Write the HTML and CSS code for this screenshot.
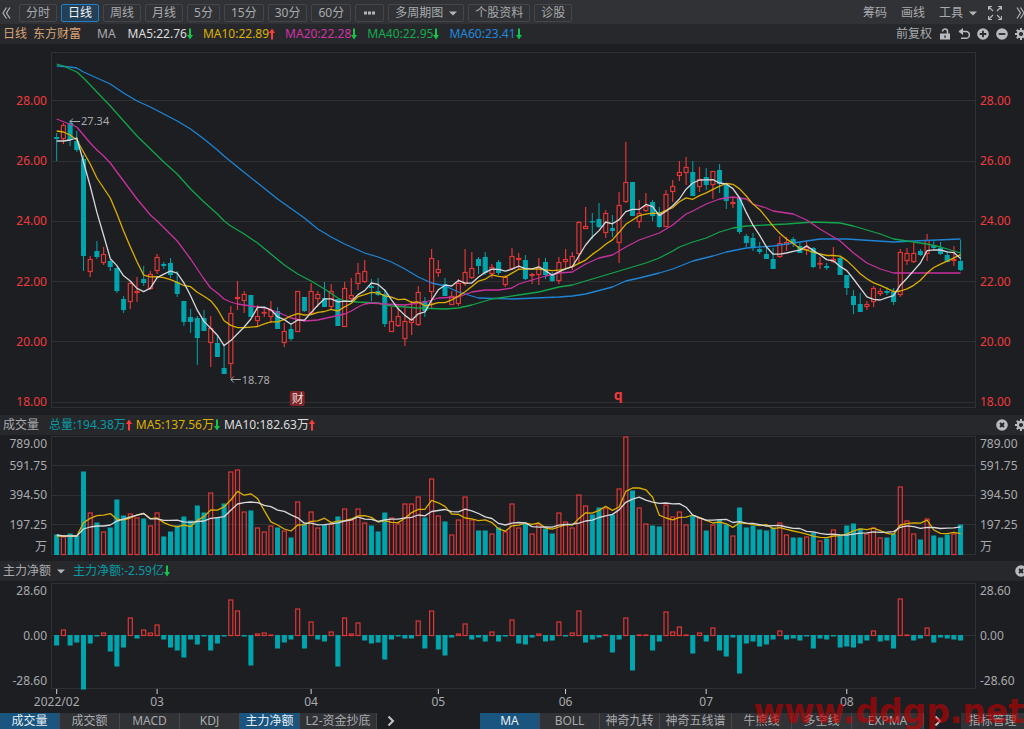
FILE: index.html
```html
<!DOCTYPE html>
<html lang="zh-CN">
<head>
  <meta charset="UTF-8">
  <meta name="viewport" content="width=device-width, initial-scale=1.0">
  <title>东方财富 日线</title>
  <link rel="stylesheet" href="styles.css">
</head>
<body>
  <!-- shared icons -->
  <svg class="sprite" aria-hidden="true">
    <symbol id="up" viewBox="0 0 6 12"><path d="M3 0.5L6 5H4V11.5H2V5H0Z" fill="#ff3b3b"/></symbol>
    <symbol id="down" viewBox="0 0 6 12"><path d="M3 11.5L6 7H4V0.5H2V7H0Z" fill="#12c64b"/></symbol>
    <symbol id="caret" viewBox="0 0 8 5"><path d="M0 0.5H8L4 4.5Z" fill="#b4b5b8"/></symbol>
    <symbol id="gear" viewBox="0 0 12 12">
      <path d="M6 0V12M0 6H12M1.8 1.8L10.2 10.2M10.2 1.8L1.8 10.2" stroke="#b9babd" stroke-width="2"/>
      <circle cx="6" cy="6" r="3.2" fill="#26282c" stroke="#b9babd" stroke-width="2.2"/>
    </symbol>
    <symbol id="close" viewBox="0 0 12 12">
      <circle cx="6" cy="6" r="5.8" fill="#b9babd"/>
      <path d="M4 4L8 8M8 4L4 8" stroke="#222327" stroke-width="1.8"/>
    </symbol>
  </svg>

  <header class="toolbar">
    <button class="icon-btn" aria-label="收起"><svg width="9" height="12" viewBox="0 0 9 12"><path d="M4.5 0.5L1 6L4.5 11.5M8 0.5L4.5 6L8 11.5" class="line"/></svg></button>
    <nav class="periods">
      <button class="btn">分时</button>
      <button class="btn active">日线</button>
      <button class="btn">周线</button>
      <button class="btn">月线</button>
      <button class="btn">5分</button>
      <button class="btn">15分</button>
      <button class="btn">30分</button>
      <button class="btn">60分</button>
      <button class="btn more" aria-label="更多"><svg width="13" height="4" viewBox="0 0 13 4"><path d="M1 .5h3v3h-3zM5 .5h3v3h-3zM9 .5h3v3h-3z" fill="#b4b5b8"/></svg></button>
      <span class="dropdown boxed">
        <select aria-label="多周期图"><option>多周期图</option></select>
        <svg class="caret"><use href="#caret"/></svg>
      </span>
      <button class="btn">个股资料</button>
      <button class="btn">诊股</button>
    </nav>
    <div class="tools">
      <button class="plain">筹码</button>
      <button class="plain">画线</button>
      <span class="dropdown">
        <select aria-label="工具"><option>工具</option></select>
        <svg class="caret"><use href="#caret"/></svg>
      </span>
      <button class="icon-btn" aria-label="全屏"><svg width="14" height="14" viewBox="0 0 14 14"><path d="M.5 4V.5H4M.5 .5L5 5M10 .5H13.5V4M13.5 .5L9 5M.5 10V13.5H4M.5 13.5L5 9M10 13.5H13.5V10M13.5 13.5L9 9" class="line"/></svg></button>
      <button class="icon-btn expand" aria-label="展开"><svg width="9" height="12" viewBox="0 0 9 12"><path d="M1 0.5L4.5 6L1 11.5M4.5 0.5L8 6L4.5 11.5" class="line"/></svg></button>
    </div>
  </header>

  <section class="info">
    <div class="legend">
      <span class="stock">日线</span>
      <span class="stock name">东方财富</span>
      <span class="label">MA</span>
      <span class="white">MA5:22.76<svg class="arrow"><use href="#down"/></svg></span>
      <span class="yellow">MA10:22.89<svg class="arrow"><use href="#up"/></svg></span>
      <span class="magenta">MA20:22.28<svg class="arrow"><use href="#down"/></svg></span>
      <span class="green">MA40:22.95<svg class="arrow"><use href="#down"/></svg></span>
      <span class="blue">MA60:23.41<svg class="arrow"><use href="#down"/></svg></span>
    </div>
    <div class="info-tools">
      <button class="plain">前复权</button>
      <button class="icon-btn" aria-label="锁定"><svg width="12" height="12" viewBox="0 0 12 12"><path d="M3.5 3.5a2.5 2.5 0 0 1 5 0V6" fill="none" stroke="#b9babd" stroke-width="1.5"/><path d="M1 5.5h10v6H1z" fill="#b9babd"/><path d="M5.3 7.5h1.4v2.2H5.3z" fill="#26282c"/></svg></button>
      <button class="icon-btn" aria-label="撤销"><svg width="12" height="12" viewBox="0 0 12 12"><path d="M1 3.5H8a3.4 3.4 0 0 1 0 6.8H3" fill="none" stroke="#b9babd" stroke-width="1.6"/><path d="M5 0V7L0.5 3.5Z" fill="#b9babd"/></svg></button>
      <button class="icon-btn" aria-label="放大"><svg width="12" height="12" viewBox="0 0 12 12"><circle cx="6" cy="6" r="5.8" fill="#b9babd"/><path d="M2.7 6H9.3M6 2.7V9.3" stroke="#26282c" stroke-width="1.8"/></svg></button>
      <button class="icon-btn" aria-label="缩小"><svg width="12" height="12" viewBox="0 0 12 12"><circle cx="6" cy="6" r="5.8" fill="#b9babd"/><path d="M2.7 6H9.3" stroke="#26282c" stroke-width="1.8"/></svg></button>
      <button class="icon-btn" aria-label="设置"><svg width="12" height="12"><use href="#gear"/></svg></button>
    </div>
  </section>

  <main>
    <section class="panel price">
      <div class="axis left"><span>28.00</span><span>26.00</span><span>24.00</span><span>22.00</span><span>20.00</span><span>18.00</span></div>
      <div class="plot"><svg id="price-chart" role="img" aria-label="日K线"></svg></div>
      <div class="axis right"><span>28.00</span><span>26.00</span><span>24.00</span><span>22.00</span><span>20.00</span><span>18.00</span></div>
    </section>

    <div class="panel-head volume-head">
      <div class="legend">
        <span class="label">成交量</span>
        <span class="cyan">总量:194.38万<svg class="arrow"><use href="#up"/></svg></span>
        <span class="yellow">MA5:137.56万<svg class="arrow"><use href="#down"/></svg></span>
        <span class="white">MA10:182.63万<svg class="arrow"><use href="#up"/></svg></span>
      </div>
      <div class="info-tools">
        <button class="icon-btn" aria-label="关闭"><svg width="12" height="12"><use href="#close"/></svg></button>
        <button class="icon-btn" aria-label="设置"><svg width="12" height="12"><use href="#gear"/></svg></button>
      </div>
    </div>

    <section class="panel volume">
      <div class="axis left"><span>789.00</span><span>591.75</span><span>394.50</span><span>197.25</span><span>万</span></div>
      <div class="plot"><svg id="volume-chart" role="img" aria-label="成交量"></svg></div>
      <div class="axis right"><span>789.00</span><span>591.75</span><span>394.50</span><span>197.25</span><span>万</span></div>
    </section>

    <div class="panel-head flow-head">
      <div class="legend">
        <span class="dropdown">
          <select aria-label="指标"><option>主力净额</option></select>
          <svg class="caret"><use href="#caret"/></svg>
        </span>
        <span class="cyan">主力净额:-2.59亿<svg class="arrow"><use href="#down"/></svg></span>
      </div>
      <div class="info-tools">
        <button class="icon-btn" aria-label="关闭"><svg width="12" height="12"><use href="#close"/></svg></button>
      </div>
    </div>

    <section class="panel flow">
      <div class="axis left"><span>28.60</span><span>0.00</span><span>-28.60</span></div>
      <div class="plot"><svg id="flow-chart" role="img" aria-label="主力净额"></svg></div>
      <div class="axis right"><span>28.60</span><span>0.00</span><span>-28.60</span></div>
    </section>
    <div class="months"><svg id="month-axis"></svg></div>
  </main>

  <footer class="tabs">
    <div class="tab-group first">
      <button class="tab active">成交量</button>
      <button class="tab">成交额</button>
      <button class="tab">MACD</button>
      <button class="tab">KDJ</button>
      <button class="tab active">主力净额</button>
      <button class="tab wide">L2-资金抄底</button>
      <button class="next" aria-label="下一页"><svg width="8" height="10" viewBox="0 0 8 10"><path d="M1.5 0.5L6 5L1.5 9.5" fill="none" stroke="#c4c5c8" stroke-width="2"/></svg></button>
    </div>
    <div class="tab-group second">
      <button class="tab active">MA</button>
      <button class="tab">BOLL</button>
      <button class="tab">神奇九转</button>
      <button class="tab medium">神奇五线谱</button>
      <button class="tab">牛熊线</button>
      <button class="tab">多空线</button>
      <button class="tab medium">EXPMA</button>
      <button class="next" aria-label="下一页"><svg width="8" height="10" viewBox="0 0 8 10"><path d="M1.5 0.5L6 5L1.5 9.5" fill="none" stroke="#c4c5c8" stroke-width="2"/></svg></button>
      <button class="tab manage">指标管理</button>
    </div>
    <span class="watermark">www.ddgp.net</span>
  </footer>

  <script src="chart.js"></script>
</body>
</html>
```

FILE: styles.css
```css
* {
  box-sizing: border-box;
}

body {
  margin: 0;
  background-color: #1d1e22;
  color: #a9aaad;
  font-family: "Noto Sans", "Noto Sans CJK SC", sans-serif;
  font-size: 12px;
  line-height: 16px;
  overflow-x: hidden;
}

button,
select {
  font: inherit;
  color: inherit;
  background: none;
  border: none;
  margin: 0;
  padding: 0;
  white-space: nowrap;
  cursor: pointer;
}

svg {
  display: block;
}

.sprite {
  display: none;
}

.line {
  fill: none;
  stroke: #b4b5b8;
  stroke-width: 1.2;
}

/* top toolbar */
.toolbar {
  display: flex;
  align-items: center;
  height: 24px;
  padding: 2px 0 0 2px;
  background-color: #303236;
  overflow: hidden;
}

.periods {
  display: flex;
  gap: 4px;
  margin-left: 8px;
}

.btn,
.boxed {
  height: 18px;
  padding: 0 6px;
  border: 1px solid #44464b;
  border-radius: 2px;
  line-height: 16px;
}

.btn.active {
  border-color: #1f7fc4;
  background-color: #234058;
  color: #f2f4f6;
}

.btn.more {
  padding: 0 7px;
}

.dropdown {
  position: relative;
  display: inline-block;
}

.dropdown select {
  appearance: none;
  height: 16px;
  line-height: 16px;
  padding-right: 13px;
  display: block;
}

.dropdown .caret {
  position: absolute;
  right: 0;
  top: 6px;
  width: 8px;
  height: 5px;
  pointer-events: none;
}

.boxed .caret {
  right: 6px;
}

.tools {
  display: flex;
  align-items: center;
  gap: 14px;
  margin-left: auto;
  margin-right: -1px;
}

.icon-btn {
  flex: none;
}

.tools .dropdown,
.tools .icon-btn {
  margin-right: -3px;
}

.tools .expand {
  margin-left: 3px;
  margin-right: 0;
}

/* moving average row */
.info,
.panel-head {
  display: flex;
  align-items: center;
  justify-content: space-between;
  height: 20px;
  padding-left: 3px;
  background-color: #26282c;
  overflow: hidden;
}

.legend {
  display: flex;
  gap: 10px;
}

.legend > span {
  display: flex;
  align-items: center;
  white-space: nowrap;
}

.legend .name {
  margin-left: -4px;
}

.name + .label {
  margin-left: 6px;
  margin-right: 2px;
}

.arrow {
  width: 6px;
  height: 12px;
}

.stock { color: #dba373; }
.white { color: #dcdcdd; }
.yellow { color: #dcb000; }
.magenta { color: #d033a5; }
.green { color: #14ab4c; }
.blue { color: #2089dc; }
.cyan { color: #089ba3; }

.info-tools {
  display: flex;
  align-items: center;
  gap: 7px;
  margin-right: -3px;
}

/* chart panels */
.panel {
  display: grid;
  grid-template-columns: 52px 1fr 48px;
  grid-template-rows: 100%;
}

.plot {
  min-width: 0;
}

.plot svg,
.months svg {
  width: 100%;
  height: 100%;
  overflow: visible;
}

.axis.left {
  padding-right: 5px;
  text-align: right;
}

.axis.right {
  padding-left: 4px;
}

.price {
  height: 356px;
  margin: 8px 0 7px;
}

.price .axis {
  display: flex;
  flex-direction: column;
  justify-content: space-between;
  padding-top: 41px;
  margin-bottom: -2px;
  color: #ee3b3b;
}

.volume-head .legend {
  gap: 4px;
}

.volume-head .cyan {
  margin-left: 6px;
}

.flow-head .legend {
  gap: 8px;
}

.volume {
  height: 119px;
  margin: 1px 0 6px;
}

.volume .axis,
.flow .axis {
  display: grid;
  align-items: center;
}

.volume .axis {
  grid-template-rows: 15px 29px 30px 29px 15px;
}

.flow {
  height: 106px;
  margin-top: 2px;
}

.flow .axis {
  grid-template-rows: 16px 1fr 16px;
}

.months {
  height: 24px;
  margin: 0 48px 0 52px;
}

/* chart drawing */
.grid {
  fill: none;
  stroke: #2e3034;
  stroke-width: 1;
}

.rise {
  fill: none;
  stroke: #e03636;
  stroke-width: 1.2;
}

.fall {
  fill: #00a5ad;
  stroke: #00a5ad;
  stroke-width: 1;
}

.ma {
  fill: none;
  stroke-width: 1.3;
  stroke-linejoin: round;
}

.ma.white { stroke: #d8d8da; }
.ma.yellow { stroke: #dcae00; }
.ma.magenta { stroke: #c8319e; }
.ma.green { stroke: #12a54a; }
.ma.blue { stroke: #1d84d6; }

.note {
  fill: #a9aaad;
  font-size: 11px;
}

.note-line {
  fill: none;
  stroke: #a9aaad;
}

.month {
  fill: #a9aaad;
  font-size: 12px;
  text-anchor: middle;
}

.tick {
  stroke: #d4d4d6;
}

.badge {
  fill: #7c2428;
}

.badge-text {
  fill: #f0dada;
  font-size: 12px;
  text-anchor: middle;
}

.mark {
  fill: #f03a3a;
  font-size: 14px;
  font-weight: bold;
  text-anchor: middle;
}

/* bottom tabs */
.tabs {
  position: relative;
  display: grid;
  grid-template-columns: 480fr 544fr;
  height: 16px;
}

.tab-group {
  display: flex;
  min-width: 0;
}

.tab {
  flex: none;
  width: 60px;
  height: 16px;
  line-height: 16px;
  background-color: #303236;
  border-right: 1px solid #45474c;
}

.tab.active {
  background-color: #19557f;
  color: #e6edf2;
}

.tab.medium {
  width: 72px;
}

.tab.wide {
  width: 77px;
}

.tab.manage {
  width: 63px;
  margin-left: auto;
  border-right: none;
}

.next {
  padding: 0 10px;
}

.watermark {
  position: absolute;
  right: 0;
  bottom: 0;
  color: rgba(200, 0, 0, 0.6);
  font-family: "DejaVu Sans", sans-serif;
  font-size: 33px;
  font-weight: bold;
  line-height: 34px;
  pointer-events: none;
}
```

FILE: chart.js
```js
// one row per day: direction, high, body top, body bottom, low (chart units, y grows downwards)
const candles = `
d 133 137 139 161|u 123 125 139 144|d 120 123 140 146|d 131 141 150 152|d 155 159 256 271
u 256 259 272 277|d 241 251 257 259|u 247 254 263 265|d 259 261 267 271|d 267 268 291 293
d 296 299 310 313|u 281 283 302 309|u 277 291 293 302|d 266 279 283 286|u 271 274 289 290
u 254 257 271 274|d 262 264 266 269|d 258 263 275 278|d 271 282 294 297|d 301 301 322 326
d 309 317 322 333|d 316 318 338 365|d 310 318 331 331|u 316 328 343 367|d 336 343 357 357
d 345 368 374 374|u 306 313 364 378|u 281 297 299 310|u 291 294 301 313|d 295 295 317 317
u 305 316 321 326|u 307 312 313 317|u 301 310 317 323|d 307 311 329 329|u 323 331 343 347
d 323 329 339 341|u 291 291 332 332|d 297 297 311 312|u 283 291 314 315|u 291 294 299 307
d 282 298 307 307|u 284 291 307 310|d 299 299 326 326|u 282 288 327 327|u 278 295 299 302
u 263 273 284 290|u 260 271 282 283|d 279 286 288 301|d 278 291 295 296|d 289 294 324 327
u 307 321 332 332|u 304 316 326 327|u 305 321 339 346|u 301 319 323 335|u 286 292 325 326
d 297 301 311 317|u 249 258 292 308|u 260 269 273 277|d 278 284 296 296|u 291 296 305 305
u 279 283 304 306|u 249 272 284 286|u 252 268 278 279|d 257 259 266 274|d 252 257 273 275
u 264 267 274 278|d 260 262 273 275|u 275 277 285 287|u 248 256 269 270|u 253 258 260 269
d 255 260 279 280|u 273 274 276 284|u 258 267 275 285|d 258 262 275 279|d 272 275 281 282
u 257 262 281 284|u 249 259 262 269|u 252 256 267 270|u 221 222 254 263|u 207 226 229 229
d 213 221 222 239|d 203 219 227 228|u 210 213 233 238|d 215 228 231 237|u 192 205 243 263
u 142 182 202 203|d 182 182 216 216|u 200 213 222 228|u 193 206 211 212|d 200 202 216 221
d 207 212 227 228|u 190 194 227 227|u 180 186 192 202|u 161 172 176 181|u 157 167 173 185
d 161 172 196 196|u 167 179 187 192|d 168 177 185 190|u 171 171 185 199|d 164 170 184 193
d 183 185 201 209|u 197 202 204 208|d 197 198 232 234|d 234 236 243 247|d 233 238 248 251
d 242 249 252 254|d 247 254 259 259|d 248 259 269 269|u 236 243 257 258|u 237 242 245 251
d 237 239 244 247|d 242 246 253 253|u 241 247 250 255|d 247 248 267 268|u 257 263 264 269
d 263 266 268 270|u 247 259 262 263|d 256 258 275 275|d 275 275 288 295|d 290 296 305 314
d 293 304 312 312|u 301 304 307 310|u 286 288 302 307|u 288 291 294 296|d 287 291 293 295
d 288 292 302 305|u 249 252 295 297|u 248 253 261 265|u 243 253 262 263|d 249 251 255 256
u 234 240 254 261|d 240 245 248 249|d 242 248 254 255|d 251 255 262 262|u 246 259 261 266
d 240 261 270 271`.trim().split(/[|\n]/).map(row => {
  const [dir, high, top, bottom, low] = row.split(' ');
  return { rise: dir === 'u', high: +high, top: +top, bottom: +bottom, low: +low };
});

const volumes = [
  20, 18, 21, 19, 83, 42, 32, 23, 27, 55, 39, 41, 37, 36, 29, 42, 18, 23, 29, 38,
  34, 49, 42, 62, 37, 51, 83, 85, 43, 44, 27, 23, 29, 27, 24, 17, 53, 31, 43, 27,
  30, 31, 38, 46, 35, 46, 32, 29, 23, 42, 37, 31, 51, 51, 58, 37, 76, 39, 33, 20,
  35, 58, 35, 24, 24, 21, 27, 23, 51, 27, 31, 21, 30, 26, 21, 42, 33, 27, 60, 49,
  40, 47, 47, 40, 66, 118, 64, 47, 31, 29, 28, 50, 38, 43, 30, 39, 37, 24, 30, 35,
  30, 19, 47, 27, 29, 25, 24, 27, 32, 20, 17, 17, 18, 22, 14, 16, 25, 20, 29, 31,
  26, 21, 27, 17, 17, 21, 68, 34, 21, 15, 36, 19, 17, 20, 21, 30
];

const flows = [
  -10, 6, -10, -7, -54, -8, -1, 3, -16, -31, -12, 18, -3, 6, 3, 11, -4, -12, -15, -22,
  -4, -9, -1, -15, -8, -1, 36, 25, -1, -30, 2, 3, 1, -13, -7, -4, 27, -13, 14, -4,
  -6, 4, -31, 18, 2, 13, -5, -8, -7, -24, -4, -1, -3, -3, 15, -13, 25, -14, -20, -2,
  2, 12, -4, -2, -6, 4, -6, -1, 16, -8, -9, -2, 2, -6, -5, 14, -1, 3, 25, -7,
  -4, -2, 1, -17, -4, 18, -35, 1, 1, -15, -6, 24, 4, 9, 1, -18, 3, -6, 8, -15,
  -21, -2, -38, -8, -6, -11, -9, -4, 5, -4, -3, -5, -1, -13, -3, -4, -1, -12, -11, -12,
  -8, -5, 5, -6, -5, -13, 37, 1, -5, -3, 8, -7, -2, -3, -4, -5
];

// long averages reach back before the first visible day, so they are kept as day/value pairs
const ma20 = [[0, 119], [3, 127], [5, 143], [6, 150], [7, 156], [8, 163], [10, 181], [12, 199], [14, 215], [15, 221], [18, 241],
  [20, 259], [22, 279], [23, 288], [24, 293], [25, 299], [26, 302], [27, 304], [29, 306], [31, 308], [33, 312], [34, 315],
  [35, 318], [37, 321], [39, 320], [41, 317], [43, 314], [44, 311], [45, 307], [46, 304], [47, 303], [49, 304], [52, 305],
  [55, 302], [57, 298], [60, 297], [62, 292], [64, 290], [66, 290], [68, 288], [69, 284], [71, 280], [73, 276], [75, 273],
  [77, 272], [79, 264], [81, 258], [83, 255], [85, 247], [87, 240], [90, 233], [92, 225], [94, 214], [95, 211], [97, 204],
  [99, 199], [101, 197], [103, 199], [104, 204], [106, 208], [107, 211], [110, 214], [112, 220], [114, 229], [116, 237],
  [117, 241], [119, 253], [121, 263], [123, 269], [125, 273], [135, 273]];
const ma40 = [[0, 64], [1, 66], [2, 69], [3, 72], [4, 78], [6, 92], [8, 106], [10, 121], [12, 136], [14, 149], [16, 162], [18, 174],
  [20, 189], [22, 202], [24, 214], [25, 221], [26, 226], [28, 234], [30, 243], [32, 254], [34, 265], [36, 274], [38, 281],
  [40, 289], [42, 298], [43, 301], [45, 302], [48, 303], [50, 306], [54, 308], [58, 309], [60, 308], [62, 305], [65, 299],
  [69, 295], [72, 292], [75, 287], [77, 285], [79, 281], [81, 277], [83, 273], [86, 267], [88, 263], [90, 258], [92, 251],
  [93, 247], [95, 242], [97, 238], [99, 232], [101, 228], [103, 226], [106, 225], [109, 224], [113, 222], [117, 223],
  [119, 226], [121, 230], [123, 234], [125, 239], [127, 241], [130, 244], [132, 247], [133, 249], [135, 253]];
const ma60 = [[0, 66], [2, 67], [3, 68], [4, 72], [5, 75], [8, 84], [10, 93], [12, 101], [14, 107], [16, 114], [18, 121], [20, 129],
  [22, 139], [24, 150], [25, 156], [27, 167], [30, 183], [33, 199], [37, 218], [39, 229], [41, 237], [43, 244], [46, 253],
  [48, 257], [50, 262], [52, 269], [54, 277], [56, 283], [58, 286], [60, 292], [62, 296], [63, 298], [68, 299], [75, 297],
  [77, 296], [79, 294], [83, 287], [85, 281], [87, 278], [90, 273], [92, 269], [95, 261], [98, 256], [100, 252], [103, 248],
  [107, 246], [109, 244], [112, 241], [114, 239], [118, 239], [125, 242], [128, 241], [135, 239]];

const months = [[0, '2022/02'], [15, '03'], [38, '04'], [57, '05'], [76, '06'], [97, '07'], [118, '08']];

const SLOTS = 138; // days that fit across a plot

// running mean; head holds the first values, which need older data
function average(values, days, head) {
  return values.map((_, i) => {
    if (i < head.length) return [i, head[i]];
    const part = values.slice(i - days + 1, i + 1);
    return [i, part.reduce((a, b) => a + b, 0) / days];
  });
}

function draw() {
  const price = document.getElementById('price-chart');
  const width = price.parentElement.clientWidth;
  const step = width / SLOTS;
  const x = i => (i + 0.7) * step;
  const bar = step * 0.6;

  const line = (points, color, y = v => v) =>
    `<polyline class="ma ${color}" points="${points.map(p => x(p[0]).toFixed(1) + ',' + y(p[1]).toFixed(1)).join(' ')}"/>`;
  const rule = y => `<path class="grid" d="M0 ${y}H${width}"/>`;
  const frame = (top, height) => `<rect class="grid" x="-0.5" y="${top + 0.5}" width="${width}" height="${height - 1}"/>`;
  const box = (i, y, height, rise) =>
    `<rect class="${rise ? 'rise' : 'fall'}" x="${(x(i) - bar / 2).toFixed(1)}" y="${y}" width="${bar.toFixed(1)}" height="${height}"/>`;

  // price
  let out = frame(52, 356) + [100.5, 161.5, 221.5, 281.5, 341.5, 402.5].map(rule).join('');
  candles.forEach((c, i) => {
    const cls = c.rise ? 'rise' : 'fall';
    out += `<path class="${cls}" d="M${x(i).toFixed(1)} ${c.high}V${c.top}M${x(i).toFixed(1)} ${c.bottom}V${c.low}"/>`;
    out += box(i, c.top + 0.5, Math.max(c.bottom - c.top - 1, 0.5), c.rise);
  });
  const closes = candles.map(c => c.rise ? c.top : c.bottom);
  out += line(ma60, 'blue') + line(ma40, 'green') + line(ma20, 'magenta');
  out += line(average(closes, 10, [131, 132, 135, 140, 152, 164, 178, 188, 198]), 'yellow');
  out += line(average(closes, 5, [141, 141, 140, 138]), 'white');
  out += `<path class="note-line" d="M${x(2)} 121.5h10m-7 -3l-3 3l3 3"/><text class="note" x="${x(2) + 11}" y="125">27.34</text>`;
  out += `<path class="note-line" d="M${x(26)} 379.5h10m-7 -3l-3 3l3 3"/><text class="note" x="${x(26) + 11}" y="384">18.78</text>`;
  out += `<rect class="badge" x="${x(36) - 8}" y="391" width="15" height="15" rx="2"/><text class="badge-text" x="${x(36)}" y="403">财</text>`;
  out += `<text class="mark" x="${x(84) - 1}" y="400">q</text>`;
  price.setAttribute('viewBox', `0 52 ${width} 356`);
  price.innerHTML = out;

  // volume
  out = frame(0, 119) + [29.5, 59.5, 88.5].map(rule).join('');
  volumes.forEach((v, i) => {
    out += box(i, 119 - v, v - 0.5, candles[i].rise);
  });
  const fromBase = v => 119 - v;
  out += line(average(volumes, 5, [19, 19, 19, 19]), 'yellow', fromBase);
  out += line(average(volumes, 10, [20, 19, 19, 19, 26, 28, 29, 29, 30]), 'white', fromBase);
  document.getElementById('volume-chart').innerHTML = out;

  // net inflow
  out = frame(0, 106) + rule(52.5);
  flows.forEach((v, i) => {
    out += box(i, v > 0 ? 53 - v : 52.5, Math.max(Math.abs(v) - 0.5, 0.5), v > 0);
  });
  document.getElementById('flow-chart').innerHTML = out;

  document.getElementById('month-axis').innerHTML = months.map(([i, text]) =>
    `<path class="tick" d="M${x(i)} 0v5"/><text class="month" x="${x(i)}" y="17">${text}</text>`).join('');
}

draw();
window.addEventListener('resize', draw);
```
